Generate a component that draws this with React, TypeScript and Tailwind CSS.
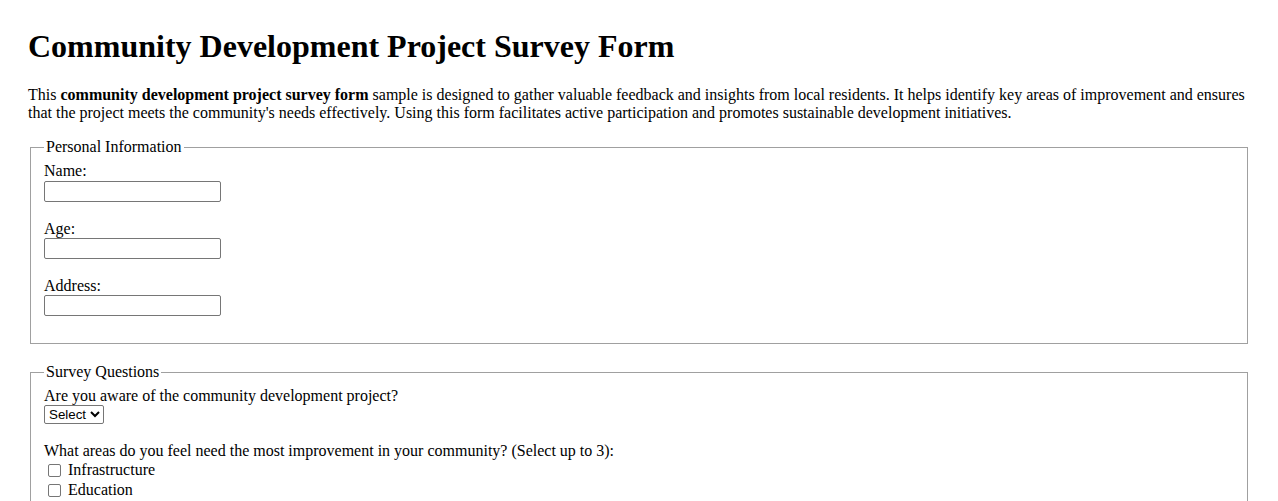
import React from 'react';

const inputCls =
  'block w-[177px] h-[21px] border border-[#767676] rounded-[2px] bg-white px-[2px] text-[13px]';

const App: React.FC = () => {
  const personal = ['Name:', 'Age:', 'Address:'];

  return (
    <div className="min-h-screen bg-white px-[28px] pt-[28px] pb-[20px] font-['Liberation_Serif',_'Times_New_Roman',_serif] text-[16px] leading-[18.4px] text-black">
      <h1 className="text-[32px] font-bold leading-[37px] mb-[21px]">
        Community Development Project Survey Form
      </h1>

      <p className="mb-[15px]">
        This <strong>community development project survey form</strong> sample is designed to gather
        valuable feedback and insights from local residents. It helps identify key areas of improvement
        and ensures that the project meets the community's needs effectively. Using this form facilitates
        active participation and promotes sustainable development initiatives.
      </p>

      <form>
        <fieldset className="mx-[2px] pl-[13px] pr-[12px] pt-[6px] pb-[10px] [border-width:1px] [border-color:#a0a0a0] border-solid">
          <legend className="px-[2px]">Personal Information</legend>
          {personal.map((label) => (
            <div key={label} className="mb-[18px] last:mb-[17px]">
              <label className="block">{label}</label>
              <input type="text" className={inputCls} />
            </div>
          ))}
        </fieldset>

        <fieldset className="mx-[2px] mt-[19px] pl-[13px] pr-[12px] pt-[5px] pb-[10px] [border-width:1px] [border-color:#a0a0a0] border-solid">
          <legend className="px-[2px]">Survey Questions</legend>
          <label className="block">Are you aware of the community development project?</label>
          <select className="block h-[19px] w-auto border border-[#767676] rounded-[2px] bg-white text-[13.33px] leading-[15px] font-['Liberation_Sans',_Arial,_sans-serif]">
            <option>Select</option>
            <option>Yes</option>
            <option>No</option>
          </select>

          <p className="mt-[18px]">
            What areas do you feel need the most improvement in your community? (Select up to 3):
          </p>
          {['Infrastructure', 'Education', 'Healthcare', 'Environment'].map((area) => (
            <label key={area} className="flex items-center h-[20px]">
              <input
                type="checkbox"
                className="ml-[4px] mr-[7px] h-[13px] w-[13px] appearance-none border border-[#767676] rounded-[2px] bg-white"
              />
              {area}
            </label>
          ))}
        </fieldset>
      </form>
    </div>
  );
};

export default App;
